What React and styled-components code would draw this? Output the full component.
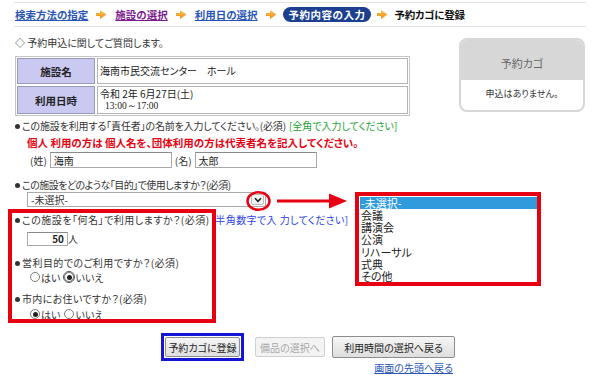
import React from "react";
import styled, { createGlobalStyle } from "styled-components";

const GlobalStyle = createGlobalStyle`
  html, body { margin: 0; padding: 0; background: #fff; }
  body {
    font-family: "Noto Sans CJK JP", "Noto Sans", sans-serif;
    font-size: 10px;
    color: #222;
    font-feature-settings: "palt";
  }
  * { box-sizing: border-box; }
`;

const Page = styled.div`
  position: relative;
  width: 600px;
  height: 379px;
  overflow: hidden;
  padding: 2px 14px 0 14px;
`;

const Crumbs = styled.nav`
  display: flex;
  align-items: center;
  gap: 8px;
  height: 25px;
  border-top: 1px solid #e2e2e2;
  border-bottom: 1px solid #e2e2e2;
  padding-left: 1px;
  font-size: 10.5px;
  font-weight: bold;
`;

const CrumbLink = styled.a`
  color: ${(p) => (p.$visited ? "#7b1a8c" : "#2a55b8")};
  text-decoration: underline;
  line-height: 14px;
`;

const CrumbCurrent = styled.span`
  display: inline-flex;
  align-items: center;
  height: 15px;
  padding: 0 6px;
  margin: 0 -2px 0 -2px;
  border-radius: 8px;
  background: #1d3f8f;
  color: #fff;
  letter-spacing: 0.5px;
`;

const CrumbPlain = styled.span`
  color: #111;
  margin-left: -2px;
  letter-spacing: -0.3px;
`;

const Arrow = () => (
  <svg width="11" height="11" viewBox="0 0 11 11">
    <defs>
      <linearGradient id="og" x1="0" y1="0" x2="0" y2="1">
        <stop offset="0" stopColor="#ffc35a" />
        <stop offset="1" stopColor="#f08a10" />
      </linearGradient>
    </defs>
    <path d="M0 4 H4 L4 1 L10.5 5.5 L4 10 L4 7 H0 Z" fill="url(#og)" />
  </svg>
);

const Content = styled.div`
  display: flex;
  align-items: flex-start;
`;

const Main = styled.main`
  width: 442px;
  flex: none;
`;

const Intro = styled.p`
  margin: 9px 0 0 1px;
  line-height: 14px;
  color: #333;
`;

const InfoTable = styled.div`
  display: grid;
  grid-template-columns: 78px 1fr;
  grid-template-rows: 26px 28px;
  gap: 2px;
  width: 395px;
  margin: 6px 0 0 1px;
  padding: 1px;
  border: 1px solid #c4c4c4;
`;

const HeadCell = styled.div`
  display: flex;
  align-items: center;
  justify-content: center;
  background: #c9c9f2;
  border: 1px solid #9a9ab8;
  font-weight: bold;
  font-size: 10.5px;
  color: #222;
`;

const DataCell = styled.div`
  display: flex;
  flex-direction: column;
  justify-content: center;
  padding-left: 2px;
  border: 1px solid #b4b4b4;
  line-height: 12px;
  color: #222;
`;

const Time = styled.span`
  font-family: "Liberation Serif", serif;
  font-size: 9.5px;
  padding-left: 5px;
`;

const Question = styled.p`
  margin: ${(p) => p.$mt}px 0 0 1px;
  line-height: 14px;
  color: #333;
  white-space: nowrap;
  display: flex;
  align-items: center;
`;

const QText = styled.span`
  letter-spacing: ${(p) => p.$ls || 0}px;
`;

const Bullet = styled.span`
  display: inline-block;
  width: 5px;
  height: 5px;
  border-radius: 50%;
  background: #333;
  margin: 0 2px 0 0;
`;

const Note = styled.span`
  color: ${(p) => p.$color};
  margin-left: ${(p) => p.$ml || 3}px;
  letter-spacing: ${(p) => p.$ls || 0}px;
`;

const Warning = styled.p`
  margin: 3px 0 0 13px;
  line-height: 14px;
  color: #e60012;
  font-weight: bold;
  font-size: 10.5px;
  white-space: nowrap;
`;

const NameRow = styled.div`
  display: flex;
  align-items: center;
  gap: 3px;
  margin: 2px 0 0 16px;
  height: 16px;
  color: #333;
`;

const TextBox = styled.div`
  width: ${(p) => p.$w}px;
  height: ${(p) => p.$h || 16}px;
  border: 1px solid #a9a9a9;
  border-top-color: #8a8a8a;
  display: flex;
  align-items: center;
  justify-content: ${(p) => (p.$right ? "flex-end" : "flex-start")};
  padding: 0 3px;
  font-weight: ${(p) => (p.$bold ? "bold" : "normal")};
  background: #fff;
  color: #222;
`;

const SelectBox = styled.div`
  display: flex;
  align-items: center;
  justify-content: space-between;
  width: 239px;
  height: 15px;
  margin-left: 13px;
  border: 1px solid #a9a9a9;
  padding: 0 1px 0 3px;
  color: #333;
`;

const ChevronBtn = styled.span`
  display: flex;
  align-items: center;
  justify-content: center;
  width: 13px;
  height: 11px;
  border: 1px solid #bbb;
  border-radius: 2px;
  background: #f2f2f2;
`;

const CountRow = styled.div`
  display: flex;
  align-items: center;
  margin: 4px 0 0 13px;
  color: #333;
`;

const RadioRow = styled.div`
  display: flex;
  align-items: center;
  gap: 4px;
  margin: ${(p) => p.$mt}px 0 0 16px;
  height: 14px;
  color: #333;
`;

const RadioLabel = styled.span`
  display: inline-flex;
  align-items: center;
  gap: 1px;
`;

const RadioDot = styled.span`
  display: inline-flex;
  align-items: center;
  justify-content: center;
  width: 10px;
  height: 10px;
  border-radius: 50%;
  border: 1px solid #7a7a7a;
  background: #fff;
  outline: ${(p) => (p.$focus ? "1px solid #555" : "none")};
  outline-offset: 0px;
  &::after {
    content: "";
    display: ${(p) => (p.$checked ? "block" : "none")};
    width: 5px;
    height: 5px;
    border-radius: 50%;
    background: #222;
  }
`;

const Buttons = styled.div`
  display: flex;
  justify-content: flex-end;
  align-items: center;
  margin-top: 12px;
  padding-right: 1px;
`;

const Focus = styled.div`
  border: 3px solid #1515d6;
  padding: 1px;
  margin-right: 11px;
`;

const Button = styled.button`
  width: ${(p) => p.$w}px;
  height: ${(p) => (p.$tall ? 22 : 20)}px;
  margin-left: ${(p) => p.$ml || 0}px;
  padding: 0;
  font-family: inherit;
  font-feature-settings: "palt";
  font-size: 10px;
  color: ${(p) => (p.disabled ? "#a8a8a8" : "#222")};
  background: ${(p) =>
    p.disabled ? "#f3f3f3" : "linear-gradient(#f6f6f6, #dedede)"};
  border: 1px solid ${(p) => (p.disabled ? "#d0d0d0" : "#8e8e8e")};
  border-radius: 2px;
`;

const TopLink = styled.a`
  display: block;
  text-align: right;
  margin: 1px 3px 0 0;
  line-height: 12px;
  color: #2a55b8;
  text-decoration: underline;
`;

const Cart = styled.aside`
  width: 126px;
  height: 74px;
  margin: 11px 1px 0 auto;
  border: 2px solid #d7d7d7;
  border-radius: 8px;
  overflow: hidden;
  background: #fff;
`;

const CartHead = styled.div`
  height: 40px;
  padding-top: 6px;
  background: #d7d7d7;
  display: flex;
  align-items: center;
  justify-content: center;
  color: #666;
  font-size: 11px;
`;

const CartBody = styled.div`
  text-align: center;
  padding-top: 7px;
  font-size: 9px;
  color: #333;
`;

/* annotation overlays */
const RedFrame = styled.div`
  position: absolute;
  left: ${(p) => p.$x}px;
  top: ${(p) => p.$y}px;
  width: ${(p) => p.$w}px;
  height: ${(p) => p.$h}px;
  border: 4px solid #e60012;
`;

const ListBox = styled(RedFrame)`
  background: #fff;
  display: flex;
  flex-direction: column;
  padding: 1px 0 0 1px;
  font-size: 11px;
  color: #222;
`;

const Option = styled.div`
  height: 12.2px;
  line-height: 12px;
  padding-left: 1px;
  background: ${(p) => (p.$selected ? "#2f9bdc" : "transparent")};
  color: ${(p) => (p.$selected ? "#fff" : "#222")};
`;

const Overlay = styled.svg`
  position: absolute;
  left: ${(p) => p.$x}px;
  top: ${(p) => p.$y}px;
  overflow: visible;
`;

export default function App() {
  return (
    <>
      <GlobalStyle />
      <Page>
        <Crumbs>
          <CrumbLink>検索方法の指定</CrumbLink>
          <Arrow />
          <CrumbLink $visited>施設の選択</CrumbLink>
          <Arrow />
          <CrumbLink>利用日の選択</CrumbLink>
          <Arrow />
          <CrumbCurrent>予約内容の入力</CrumbCurrent>
          <Arrow />
          <CrumbPlain>予約カゴに登録</CrumbPlain>
        </Crumbs>
        <Content>
          <Main>
            <Intro>◇ 予約申込に関してご質問します。</Intro>
            <InfoTable>
              <HeadCell>施設名</HeadCell>
              <DataCell>海南市民交流センター　ホール</DataCell>
              <HeadCell>利用日時</HeadCell>
              <DataCell>
                <span>令和 2年 6月27日(土)</span>
                <Time>13:00～17:00</Time>
              </DataCell>
            </InfoTable>

            <Question $mt={3}>
              <Bullet />
              <QText $ls={-0.15}>この施設を利用する「責任者」の名前を入力してください。(必須)</QText>
              <Note $color="#27a33a" $ml={3}>[全角で入力してください]</Note>
            </Question>
            <Warning>
              個人 利用の方は 個人名を、団体利用の方は代表者名を記入してください。
            </Warning>
            <NameRow>
              <span>(姓)</span>
              <TextBox $w={122}>海南</TextBox>
              <span>(名)</span>
              <TextBox $w={122}>太郎</TextBox>
            </NameRow>

            <Question $mt={10}>
              <Bullet />
              <QText $ls={-0.55}>この施設をどのような「目的」で使用しますか？(必須)</QText>
            </Question>
            <SelectBox>
              <span>-未選択-</span>
              <ChevronBtn>
                <svg width="8" height="6" viewBox="0 0 8 6">
                  <path d="M1 1.2 L4 4.3 L7 1.2" fill="none" stroke="#222" strokeWidth="1.6" />
                </svg>
              </ChevronBtn>
            </SelectBox>

            <Question $mt={6}>
              <Bullet />
              <QText $ls={0.5}>この施設を「何名」で利用しますか？(必須)</QText>
              <Note $color="#2b3fe8" $ml={2} $ls={0.4}>[半角数字で入 力してください]</Note>
            </Question>
            <CountRow>
              <TextBox $w={41} $h={14} $right $bold>50</TextBox>
              <span>人</span>
            </CountRow>

            <Question $mt={10}>
              <Bullet />
              <QText $ls={0.45}>営利目的でのご利用ですか？(必須)</QText>
            </Question>
            <RadioRow $mt={0}>
              <RadioLabel><RadioDot />はい</RadioLabel>
              <RadioLabel><RadioDot $checked $focus />いいえ</RadioLabel>
            </RadioRow>

            <Question $mt={8}>
              <Bullet />
              <QText $ls={0.35}>市内にお住いですか？(必須)</QText>
            </Question>
            <RadioRow $mt={1}>
              <RadioLabel><RadioDot $checked />はい</RadioLabel>
              <RadioLabel><RadioDot />いいえ</RadioLabel>
            </RadioRow>

            <Buttons>
              <Focus>
                <Button $w={75}>予約カゴに登録</Button>
              </Focus>
              <Button disabled $w={70}>備品の選択へ</Button>
              <Button $tall $w={123} $ml={7}>利用時間の選択へ戻る</Button>
            </Buttons>
            <TopLink>画面の先頭へ戻る</TopLink>
          </Main>

          <Cart>
            <CartHead>予約カゴ</CartHead>
            <CartBody>申込はありません。</CartBody>
          </Cart>
        </Content>

        <Overlay $x={246} $y={191} width="25" height="20">
          <ellipse cx="12.5" cy="10" rx="11" ry="8.8" fill="none" stroke="#e60012" strokeWidth="2.5" />
        </Overlay>
        <Overlay $x={277} $y={192} width="71" height="18">
          <path d="M0 9 H58" stroke="#e60012" strokeWidth="3" />
          <path d="M52 1.5 L70 9 L52 16.5 Z" fill="#e60012" />
        </Overlay>

        <ListBox $x={355} $y={192} $w={186} $h={94}>
          <Option $selected>-未選択-</Option>
          <Option>会議</Option>
          <Option>講演会</Option>
          <Option>公演</Option>
          <Option>リハーサル</Option>
          <Option>式典</Option>
          <Option>その他</Option>
        </ListBox>

        <RedFrame $x={8} $y={209} $w={208} $h={114} />
      </Page>
    </>
  );
}
